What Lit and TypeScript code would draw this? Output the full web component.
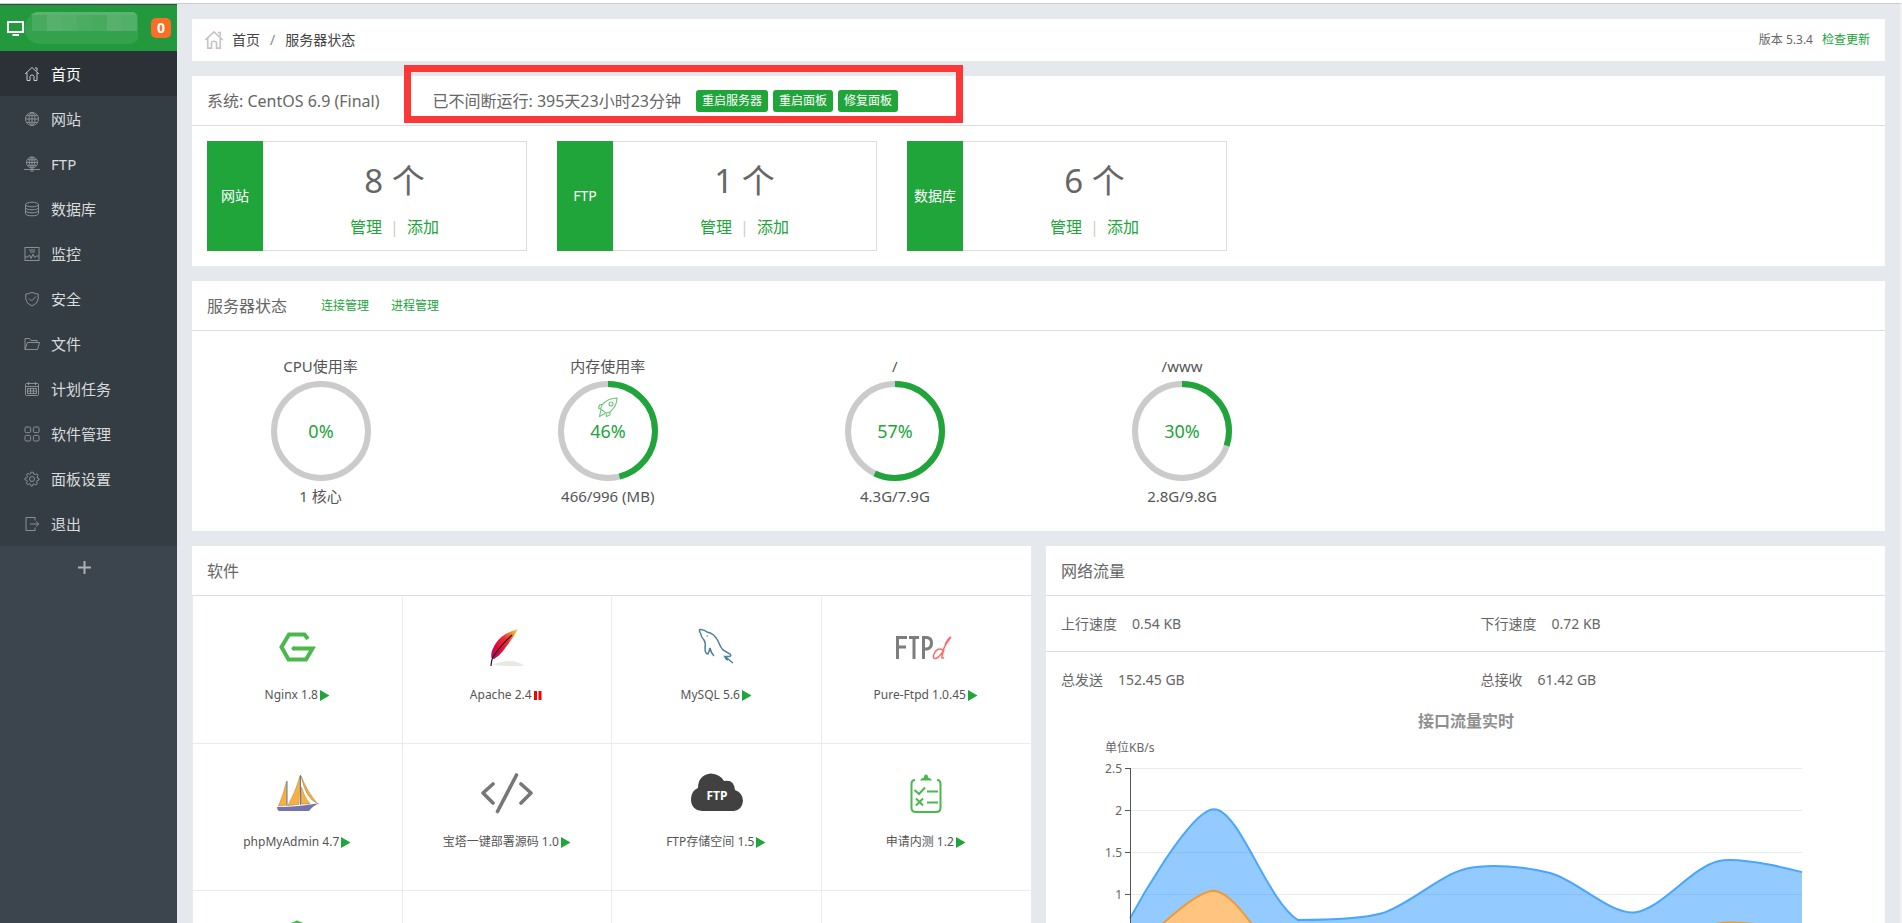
import { LitElement, html, css, svg, nothing } from "lit";
import { customElement, property } from "lit/decorators.js";
import { classMap } from "lit/directives/class-map.js";

const home = svg`<path d="M1 8 8 1.5 15 8M3 6.5V14.5H6V10.5Q6 9 8 9T10 10.5V14.5H13V6.5M11 2H13V5"/>`;

const icons: Record<string, unknown> = {
  home,
  globe: svg`<circle cx="8" cy="8" r="6.5"/><ellipse cx="8" cy="8" rx="3" ry="6.5"/><path d="M8 1.5V14.5M1.5 8H14.5M2.6 4.6H13.4M2.6 11.4H13.4"/>`,
  ftp: svg`<circle cx="8" cy="6.5" r="5.5"/><ellipse cx="8" cy="6.5" rx="2.5" ry="5.5"/><path d="M8 1V14M2.5 6.5H13.5M3.5 3.8H12.5M3.5 9.3H12.5M0 13.5H16M6 15H10"/>`,
  db: svg`<ellipse cx="8" cy="3.5" rx="6.5" ry="2.3"/><path d="M1.5 3.5V12.5Q2 14.8 8 14.8T14.5 12.5V3.5M1.5 6.5Q2 8.8 8 8.8T14.5 6.5M1.5 9.5Q2 11.8 8 11.8T14.5 9.5"/>`,
  monitor: svg`<rect x="1" y="1.5" width="14" height="13"/><path d="M1 11H4L5.500 9 7 12.5 9 8 10.5 11.5 12 10H15M5 4H11M6 6H11"/>`,
  shield: svg`<path d="M1.8 3Q5 3 8 1.3 11 3 14.2 3V8Q14 12.5 8 15 2 12.5 1.8 8ZM5 7.5 7.5 10 12 5.5"/>`,
  folder: svg`<path d="M1 13.5V2.5H5.5L7 4.5H13V6.5M1 13.5 3.5 6.5H15.5L13.5 13.5Z"/>`,
  calendar: svg`<rect x="1.5" y="2.5" width="13" height="12" rx="1"/><path d="M1.5 5.5H14.5M4.5 1V4M11.5 1V4M3.5 7.5H12.5V12.5H3.5ZM3.5 10H12.5M6.5 7.5V12.5M9.5 7.5V12.5"/>`,
  grid: svg`<rect x="1" y="1" width="5.6" height="5.6" rx="1.2"/><rect x="9.4" y="1" width="5.6" height="5.6" rx="1.2"/><rect x="1" y="9.4" width="5.6" height="5.6" rx="1.2"/><rect x="9.4" y="9.4" width="5.6" height="5.6" rx="1.2"/>`,
  gear: svg`<path d="M6.8 1.2H9.2L9.7 3 11.3 3.7 12.9 2.8 14 4.6 13 6 13.3 7 15 7.6V9L13.2 9.6 12.6 11 13.3 12.8 11.8 14 10.2 13 9 13.3 8.6 15H7L6.6 13.3 5.2 12.8 3.6 13.6 2.4 12.2 3.2 10.6 2.8 9.4 1 8.8V7.2L2.8 6.6 3.4 5.2 2.6 3.6 4 2.4 5.6 3.3 6.6 2.9Z"/><circle cx="8" cy="8" r="2.5"/>`,
  exit: svg`<path d="M11 4.5V1.5H2V14.5H11V11.5M6 8H14.5M12 5.5 14.8 8 12 10.5"/>`,
};

const menu = [
  ["home", "首页"], ["globe", "网站"], ["ftp", "FTP"], ["db", "数据库"], ["monitor", "监控"], ["shield", "安全"],
  ["folder", "文件"], ["calendar", "计划任务"], ["grid", "软件管理"], ["gear", "面板设置"], ["exit", "退出"],
];

const counts = [
  { name: "网站", count: 8 },
  { name: "FTP", count: 1 },
  { name: "数据库", count: 6 },
];

const gauges = [
  { title: "CPU使用率", percent: 0, detail: "1 核心", boost: false },
  { title: "内存使用率", percent: 46, detail: "466/996 (MB)", boost: true },
  { title: "/", percent: 57, detail: "4.3G/7.9G", boost: false },
  { title: "/www", percent: 30, detail: "2.8G/9.8G", boost: false },
];

const logos: Record<string, unknown> = {
  nginx: svg`<path d="M35 16 31.500 11.500H16L8.500 24 15.500 36.500H33L39.500 25.500H20" fill="none" stroke="#4bb84b" stroke-width="4"/><circle cx="20.500" cy="25.500" r="2" fill="#4bb84b"/>`,
  apache: svg`
    <defs><linearGradient id="feather" x1="0" y1="1" x2="1" y2="0"><stop offset="0" stop-color="#9b1470"/><stop offset=".3" stop-color="#e0083c"/><stop offset=".6" stop-color="#ee2d38"/><stop offset=".8" stop-color="#f08a35"/><stop offset="1" stop-color="#efe04a"/></linearGradient></defs>
    <path d="M10 42Q17 38 26 38 36 38 41 43 24 43.500 10 42Z" fill="#e9e9e4"/>
    <path d="M35 6Q20 10 13 20 7 29 8.500 35L11 36Q16 33 20 28 22 25 24.500 22 30 15 35 6Z" fill="url(#feather)"/>
    <path d="M29 12Q17 23 10 34 8 38 8 43" fill="none" stroke="#32101c" stroke-width="1.200"/>`,
  mysql: svg`<path d="M8.500 10Q6 6 9 6.500 13 7 15 9 22 10 26 18 29 25 31 27L38 31Q40 33 37 33.500H33Q36 36 41 40M33 33.500Q33 36 36 37M8.500 10Q9 14 12 17 14 20 13 25 13 31 16 31 17 29 18 25 19 30 22 33M15 12.500 15.500 13.500" fill="none" stroke="#4f8099" stroke-width="1.500"/>`,
  ftpd: svg`<g fill="none" stroke="#7d7d7d" stroke-width="3"><path d="M-4.500 36V14.500H5M-4.500 24H4M7 14.500H17M12 14.500V36M21.500 36V14.500H25Q29.500 15 29.500 20T25 26H21.500"/></g><path d="M49 14Q44 20 41 27M41 27Q35 24 32 31 30 36 34 35.500 39 33 42 26L40 33Q39 36 42 34.500M49 14Q46 15 43 22" fill="none" stroke="#ff6b6b" stroke-width="1.500"/>`,
  pma: svg`<g fill="#fbaf3c" stroke="#9a7b46" stroke-width=".5"><path d="M13.500 11.500V35L5.500 36Q10 26 13.500 11.500Z"/><path d="M27 6 26 34.500 15 35.500Q23 21 27 6Z"/><path d="M28.500 17V34H37Q31 27 28.500 17Z"/><path d="M28 6Q35 23 44 33 33 29 28 6Z"/></g><path d="M27.500 5V35M14 11V36" stroke="#777" stroke-width="1"/><path d="M4 37Q25 37 47 33 40 35.500 36 41H6Q4 40 4 37Z" fill="#7474ad"/>`,
  code: svg`<path d="M10 14 0 23 10 33M38 14 48 23 38 33M33.500 5 14.500 41.500" fill="none" stroke="#777" stroke-width="3.600" stroke-linecap="round" stroke-linejoin="round"/>`,
  cloud: svg`<path d="M10 41Q-1 40-1 29-1 21 6 18 6 5 19 3.500 28 4 32 11 42 9 43 20 51 23 51 31 50 40 42 41Z" fill="#414141"/><text x="25" y="30" fill="#fff" font-size="12" font-weight="700" text-anchor="middle" font-family="Noto Sans, sans-serif">FTP</text>`,
  list: svg`<g fill="none" stroke="#4bb84b" stroke-width="2"><path d="M13 10Q9.500 10 9.500 14V38Q9.500 42 14 42H34Q38.500 42 38.500 38V14Q38.500 10 35 10"/><path d="M12.500 20 17 24 23 17.500M25 21.500H36M14 28.500 21 35.500M21 28.500 14 35.500M25 32.500H36"/></g><path d="M18 10.500Q19 8 22 7.500 22 4.500 24 4.500T26 7.500Q29 8 30 10.500Z" fill="#4bb84b"/>`,
  guard: svg`<path d="M24 5Q16 9 8 9V24Q9 38 24 44 39 38 40 24V9Q32 9 24 5Z" fill="none" stroke="#4bb84b" stroke-width="3"/>`,
  bolt: svg`<path d="M37 6 20 26H28L20 44 38 22H29Z" fill="#fdf0a0"/>`,
};

const software = [
  { logo: "nginx", name: "Nginx 1.8", on: true },
  { logo: "apache", name: "Apache 2.4", on: false },
  { logo: "mysql", name: "MySQL 5.6", on: true },
  { logo: "ftpd", name: "Pure-Ftpd 1.0.45", on: true },
  { logo: "pma", name: "phpMyAdmin 4.7", on: true },
  { logo: "code", name: "宝塔一键部署源码 1.0", on: true },
  { logo: "cloud", name: "FTP存储空间 1.5", on: true },
  { logo: "list", name: "申请内测 1.2", on: true },
  { logo: "guard", name: "" },
  { logo: "", name: "" },
  { logo: "bolt", name: "" },
  { logo: "", name: "" },
] as { logo: string; name: string; on?: boolean }[];

const sans = css`"Noto Sans", "Noto Sans CJK SC", sans-serif`;

@customElement("usage-gauge")
class UsageGauge extends LitElement {
  @property() heading = "";
  @property() detail = "";
  @property({ type: Number }) percent = 0;
  @property({ type: Boolean }) boost = false;

  static styles = css`
    :host { display: flex; flex-direction: column; align-items: center; gap: 5px; font: 15px/20px ${sans}; color: #555; }
    .ring { display: block; width: 100px; height: 100px; }
    .value { font: 18px ${sans}; fill: #20a53a; text-anchor: middle; }
  `;

  render() {
    const length = 2 * Math.PI * 47;
    return html`
      <div>${this.heading}</div>
      <svg class="ring" viewBox="0 0 100 100" role="img" aria-label=${this.heading}>
        <circle cx="50" cy="50" r="47" fill="none" stroke="#cbcbcb" stroke-width="6" />
        ${this.percent ? svg`<circle cx="50" cy="50" r="47" fill="none" stroke="#20a53a" stroke-width="6"
          stroke-dasharray="${(length * this.percent) / 100} ${length}" transform="rotate(-90 50 50)"/>` : nothing}
        ${this.boost ? svg`<g fill="none" stroke="#6cc47c" stroke-width="1.100">
          <path d="M59 17Q50 17 44 24L42.500 28 48 32 52 31Q59 25 59 17ZM45 23 41.500 24 40.500 27 42.500 28M52 31 52 34 48.500 35.500 48 32M43 29 41.500 35.500 47 32.500"/>
          <circle cx="53" cy="23" r="2"/></g>` : nothing}
        <text class="value" x="50" y="57">${this.percent}%</text>
      </svg>
      <div>${this.detail}</div>`;
  }
}

type Point = [number, number];

/* Smooths a poly-line, keeping every control point within the series' own bounds. */
function smoothPath(points: Point[], smooth = 0.3): string {
  const ys = points.map((p) => p[1]);
  const low = Math.min(...ys);
  const high = Math.max(...ys);
  const clamp = (y: number) => Math.min(high, Math.max(low, y));
  let path = `M${points[0]}`;
  let lead: Point = points[0];
  for (let i = 1; i < points.length; i++) {
    const [x, y] = points[i];
    let before: Point = [x, y];
    let after: Point = [x, y];
    if (i < points.length - 1) {
      const [px, py] = points[i - 1];
      const [nx, ny] = points[i + 1];
      const dPrev = Math.hypot(x - px, y - py);
      const dNext = Math.hypot(nx - x, ny - y);
      const ratio = dNext / (dNext + dPrev);
      before = [x - (nx - px) * smooth * (1 - ratio), clamp(y - (ny - py) * smooth * (1 - ratio))];
      after = [x + (nx - px) * smooth * ratio, clamp(y + (ny - py) * smooth * ratio)];
    }
    path += `C${lead} ${before} ${x},${y}`;
    lead = after;
  }
  return path;
}

@customElement("traffic-chart")
class TrafficChart extends LitElement {
  static styles = css`
    :host { display: block; }
    .plot { display: block; width: 100%; }
    .title { font: bold 16px "Noto Sans CJK SC", sans-serif; fill: #909090; text-anchor: middle; }
    .label { font: 12px ${sans}; fill: #666; }
    .tick { text-anchor: end; }
  `;

  private down = [0.71, 2.01, 0.69, 0.77, 1.3, 1.25, 0.78, 1.39, 1.26];
  private up = [0.26, 1.04, 0.05, 0.1, 0.25, 0.3, 0.2, 0.65, 0.56];

  render() {
    const left = 84, right = 756, base = 270, unit = 84;
    const place = (values: number[]) =>
      values.map((v, i): Point => [left + ((right - left) * i) / (values.length - 1), base - v * unit]);
    const down = smoothPath(place(this.down));
    const up = smoothPath(place(this.up));
    const close = `L${right},${base}L${left},${base}Z`;
    return html`
      <svg class="plot" viewBox="0 0 839 310" role="img" aria-label="接口流量实时">
        <text class="title" x="420" y="19">接口流量实时</text>
        <text class="label" x="59" y="44">单位KB/s</text>
        ${[2.5, 2, 1.5, 1, 0.5, 0].map((v) => svg`
          <path d="M${left} ${base - v * unit + 0.5}H${right}" stroke="#eaeaea"/>
          <text class="label tick" x="76" y=${base - v * unit + 5}>${v}</text>`)}
        <path d=${down + close} fill="#1e90ff" fill-opacity=".48" />
        <path d=${down} fill="none" stroke="#4aa5ff" stroke-width="2" />
        <path d=${up + close} fill="#ffc580" />
        <path d=${up} fill="none" stroke="#f3992f" stroke-width="2" />
        <path d="M84.500 60V270${[0, 0.5, 1, 1.5, 2, 2.5].map((v) => `M79 ${base - v * unit + 0.5}H84.500`).join("")}" stroke="#555" fill="none" />
      </svg>`;
  }
}

@customElement("app-root")
class AppRoot extends LitElement {
  static styles = css`
    * { box-sizing: border-box; }
    :host { display: flex; flex-direction: column; height: 100vh; background: #fff; color: #666; font: 14px/20px ${sans}; }
    a { color: #20a53a; text-decoration: none; }
    h2 { margin: 0; font-size: 16px; font-weight: 400; }
    ul { margin: 0; padding: 0; list-style: none; }

    .shell { flex: 1; min-height: 0; display: flex; margin-top: 3px; border-top: 1px solid #ccc; border-right: 2px solid #f1f1f1; background: #e5e9ed; }
    .side { flex: none; width: 177px; background: #3c444d; border-top: 1px solid #3c444d; overflow: hidden; }
    .brand { display: flex; align-items: center; height: 46px; padding: 0 6px 0 6px; background: #23993e; }
    .screen { width: 18px; height: 18px; }
    .mask { width: 114px; height: 34px; }
    .badge { margin-left: auto; width: 20px; height: 20px; border-radius: 5px; background: #fc6d26; color: #fff; font-weight: 700; text-align: center; }
    .entry { display: flex; align-items: center; gap: 11px; height: 45px; padding-left: 24px; background: #353d44; color: #d8dadb; font-size: 15px; }
    .entry.active { background: #2c3138; color: #fff; }
    .glyph { width: 16px; height: 16px; fill: none; stroke: #8b9094; stroke-width: 1; }
    .active .glyph { stroke: #c8cacc; }
    .add { display: block; width: 169px; height: 42px; padding: 0; border: 0; background: none; }
    .plus { display: block; margin: auto; width: 13px; height: 13px; stroke: #aab0b4; stroke-width: 2; }

    .main { flex: 1; min-width: 0; overflow-y: auto; scrollbar-width: none; padding: 15px; display: flex; flex-direction: column; gap: 15px; }
    .panel { flex: none; background: #fff; }
    .crumbs { display: flex; align-items: center; height: 42px; padding: 0 15px 0 12px; color: #444; }
    .crumbs a { color: #444; }
    .crumb-home { width: 20px; height: 20px; margin-right: 8px; fill: none; stroke: #c4c4c4; stroke-width: 1.300; }
    .slash { padding: 0 10px; color: #888; }
    .version { margin-left: auto; display: flex; gap: 9px; font-size: 12px; color: #666; }
    .version a { color: #20a53a; }

    .head { position: relative; display: flex; align-items: center; height: 50px; padding: 0 15px; border-bottom: 1px solid #ddd; font-size: 16px; }
    .uptime { margin-left: 53px; margin-right: 15px; }
    .actions { display: flex; gap: 5px; }
    .action { height: 22px; padding: 0 6px; border: 0; border-radius: 3px; background: #20a53a; color: #fff; font: 12px/22px ${sans}; }
    .mark { position: absolute; left: 212px; top: -11px; width: 559px; height: 58px; border: 7px solid #fc3737; pointer-events: none; }
    .links { display: flex; gap: 22px; margin-left: 34px; font-size: 12px; }

    .cards { display: flex; gap: 30px; padding: 15px; }
    .card { display: flex; width: 320px; height: 110px; border: 1px solid #ddd; border-left: 0; }
    .kind { flex: none; display: grid; place-items: center; width: 56px; margin: -1px 0; background: #20a53a; color: #fff; }
    .figures { flex: 1; display: flex; flex-direction: column; align-items: center; gap: 14px; padding-top: 17px; }
    .count { font-size: 33px; line-height: 44px; }
    .manage { display: flex; gap: 8px; font-size: 16px; color: #ccc; }

    .gauges { display: grid; grid-template-columns: repeat(6, 1fr); margin: 0 -15px; padding: 25px 0; }

    .columns { flex: none; display: grid; grid-template-columns: 1fr 1fr; gap: 15px; align-items: start; }
    .apps { display: grid; grid-template-columns: repeat(4, 1fr); padding-top: 1px; border-left: 1px solid #eaeaf4; }
    .app { display: flex; flex-direction: column; align-items: center; gap: 14px; height: 147px; padding-top: 26px; border-right: 1px solid #eaeaf4; border-bottom: 1px solid #eaeaf4; }
    .app:nth-child(4n) { border-right-color: #fff; }
    .logo { width: 48px; height: 48px; overflow: visible; }
    .name { display: flex; align-items: center; gap: 2px; font-size: 12px; color: #555; }
    .state { width: 10px; height: 11px; }

    .traffic { display: grid; grid-template-columns: 1fr 1fr; height: 56px; align-items: center; }
    .traffic.ruled { border-bottom: 1px solid #ddd; }
    .pair { display: flex; gap: 15px; padding-left: 15px; }
  `;

  private renderSide() {
    const tiles = Array.from({ length: 7 }, (_, i) => [i * 15 + 8, 0.1 + ((i * 3) % 4) * 0.025]);
    return html`
      <nav class="side">
        <div class="brand">
          <svg class="screen" viewBox="0 0 18 18" aria-hidden="true"><path d="M2 3H17V13H2ZM6.500 16H13" fill="none" stroke="#fff" stroke-width="2"/></svg>
          <svg class="mask" viewBox="0 0 114 34" aria-hidden="true">
            <path d="M12 1H110L114 4V28Q110 33 104 33H14Q2 31 0 17 2 6 12 1Z" fill="#fff" fill-opacity=".08"/>
            <path d="M12 1H110L113 4H6Z" fill="#fff" fill-opacity=".2"/>
            ${tiles.map(([x, o]) => svg`<rect x=${x} y="4" width="15" height="16" fill="#fff" fill-opacity=${o}/>`)}
          </svg>
          <span class="badge">0</span>
        </div>
        <ul>
          ${menu.map(([icon, label], i) => html`
            <li><a href="#" class=${classMap({ entry: true, active: i === 0 })}>
              <svg class="glyph" viewBox="0 0 16 16" aria-hidden="true">${icons[icon]}</svg>${label}
            </a></li>`)}
        </ul>
        <button class="add" aria-label="添加"><svg class="plus" viewBox="0 0 13 13"><path d="M6.500 0V13M0 6.500H13"/></svg></button>
      </nav>`;
  }

  private renderApp(app: { logo: string; name: string; on?: boolean }) {
    return html`
      <li class="app">
        <svg class="logo" viewBox="0 0 48 48" aria-hidden="true">${logos[app.logo] ?? nothing}</svg>
        ${app.name ? html`<div class="name">${app.name}
          <svg class="state" viewBox="0 0 10 11" aria-hidden="true">
            ${app.on ? svg`<path d="M0 0 9.500 5.500 0 11Z" fill="#20a53a"/>` : svg`<path d="M0 1H3V10H0ZM4.500 1H7.500V10H4.500Z" fill="#f00"/>`}
          </svg></div>` : nothing}
      </li>`;
  }

  render() {
    return html`
      <div class="shell">
        ${this.renderSide()}
        <main class="main">
          <div class="panel crumbs">
            <svg class="crumb-home" viewBox="0 0 16 16" aria-hidden="true">${home}</svg>
            <a href="#">首页</a><span class="slash">/</span><span>服务器状态</span>
            <div class="version"><span>版本 5.3.4</span><a href="#">检查更新</a></div>
          </div>

          <section class="panel">
            <div class="head">
              <h2>系统: CentOS 6.9 (Final)</h2>
              <span class="uptime">已不间断运行: 395天23小时23分钟</span>
              <div class="actions">
                ${["重启服务器", "重启面板", "修复面板"].map((t) => html`<button class="action">${t}</button>`)}
              </div>
              <div class="mark"></div>
            </div>
            <div class="cards">
              ${counts.map((c) => html`
                <div class="card">
                  <div class="kind">${c.name}</div>
                  <div class="figures">
                    <div class="count">${c.count} 个</div>
                    <div class="manage"><a href="#">管理</a><span>|</span><a href="#">添加</a></div>
                  </div>
                </div>`)}
            </div>
          </section>

          <section class="panel">
            <div class="head">
              <h2>服务器状态</h2>
              <div class="links"><a href="#">连接管理</a><a href="#">进程管理</a></div>
            </div>
            <div class="gauges">
              ${gauges.map((g) => html`<usage-gauge .heading=${g.title} .percent=${g.percent} .detail=${g.detail} .boost=${g.boost}></usage-gauge>`)}
            </div>
          </section>

          <div class="columns">
            <section class="panel">
              <div class="head"><h2>软件</h2></div>
              <ul class="apps">${software.map((s) => this.renderApp(s))}</ul>
            </section>
            <section class="panel">
              <div class="head"><h2>网络流量</h2></div>
              <div class="traffic ruled">
                <div class="pair"><span>上行速度</span><span>0.54 KB</span></div>
                <div class="pair"><span>下行速度</span><span>0.72 KB</span></div>
              </div>
              <div class="traffic">
                <div class="pair"><span>总发送</span><span>152.45 GB</span></div>
                <div class="pair"><span>总接收</span><span>61.42 GB</span></div>
              </div>
              <traffic-chart></traffic-chart>
            </section>
          </div>
        </main>
      </div>`;
  }
}
